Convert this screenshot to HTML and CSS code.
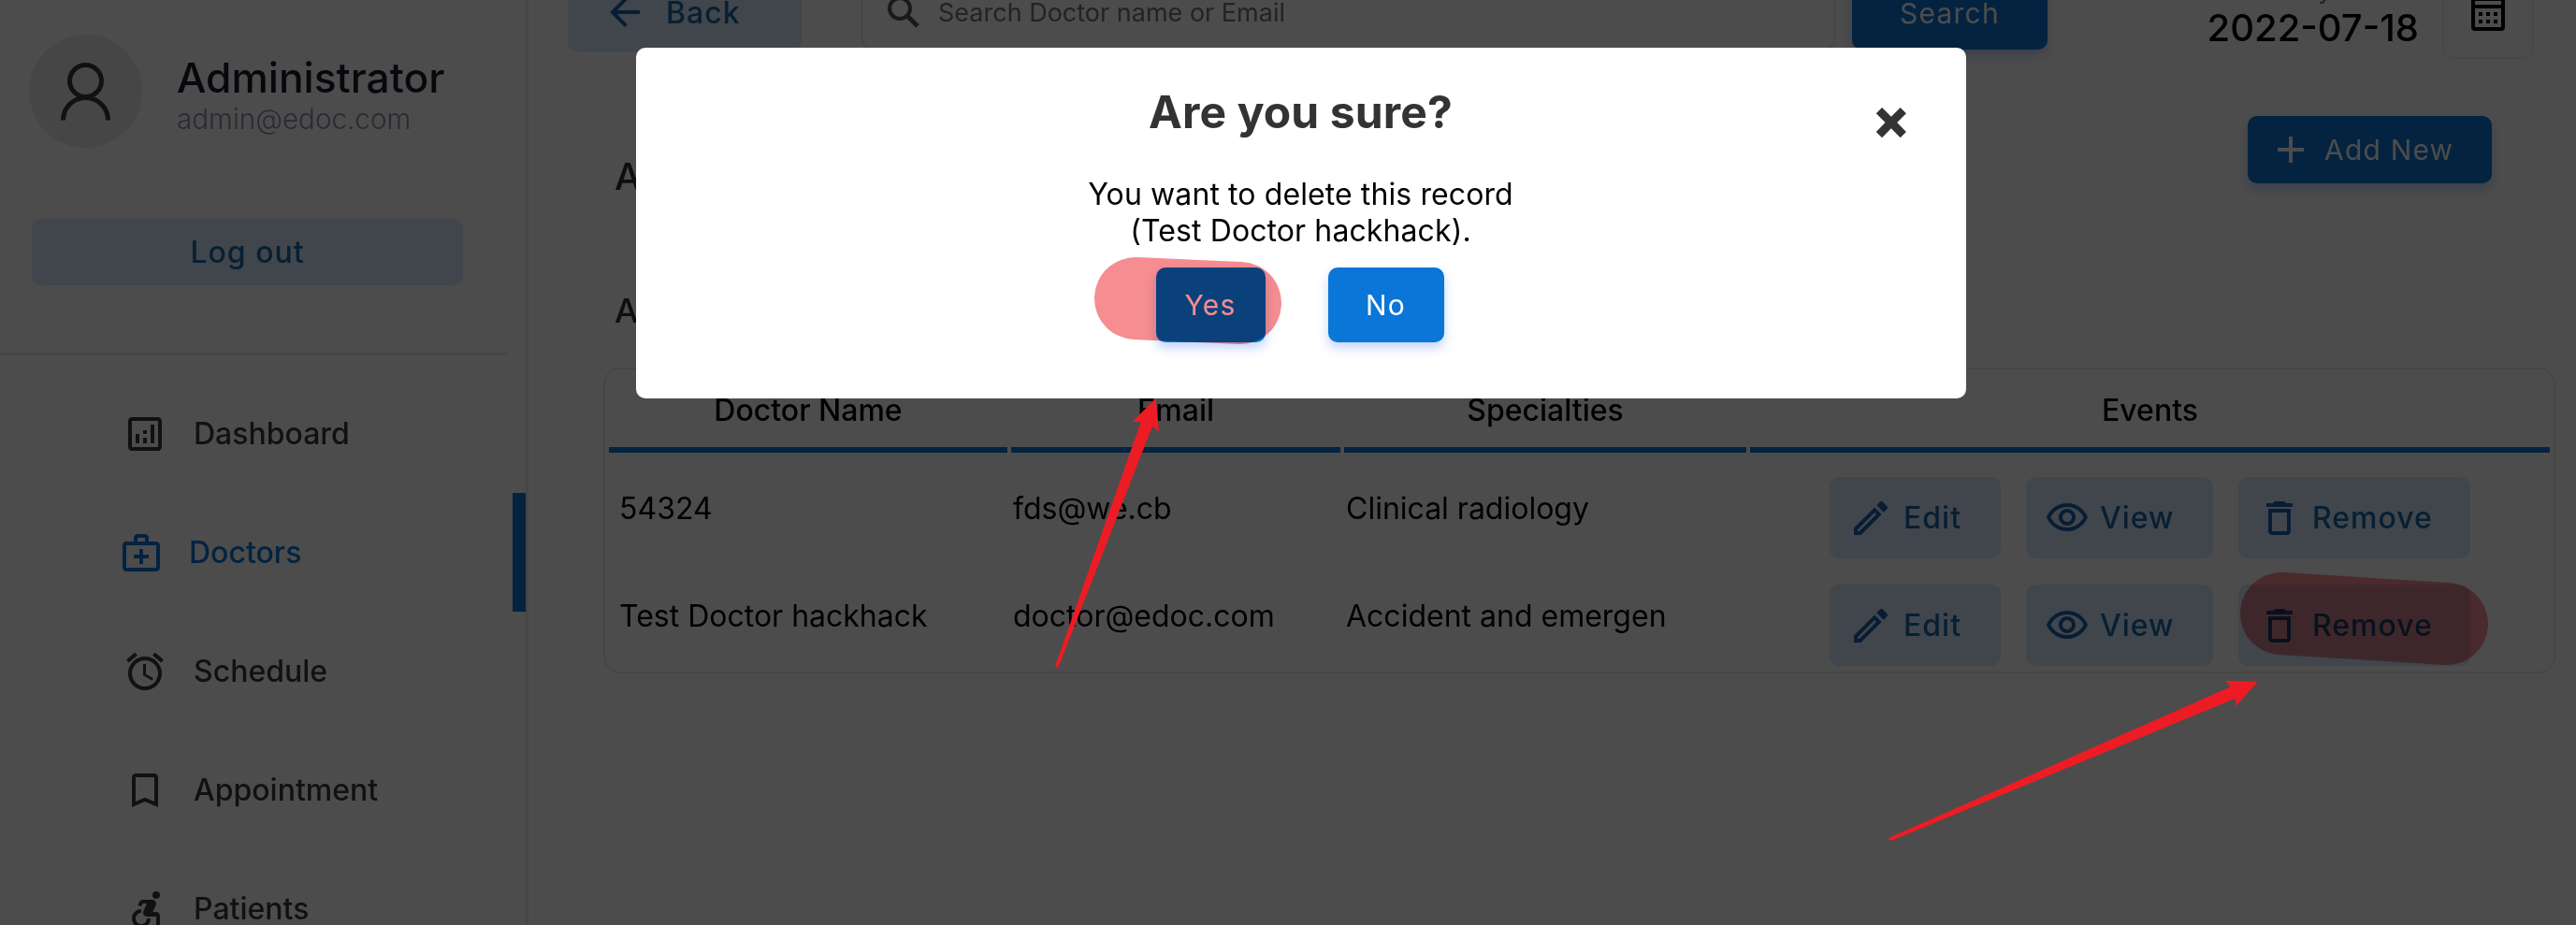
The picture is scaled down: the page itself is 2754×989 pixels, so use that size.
FILE: index.html
```html
<!DOCTYPE html>
<html lang="en">
<head>
<meta charset="utf-8">
<title>Doctors</title>
<link rel="stylesheet" href="styles.css">
</head>
<body>
<svg class="defs" aria-hidden="true">
  <symbol id="i-edit" viewBox="0 0 24 24"><path d="M14.06 9.02l.92.92L5.92 19H5v-.92l9.06-9.06M17.66 3c-.25 0-.51.1-.7.29l-1.83 1.83 3.75 3.75 1.83-1.83c.39-.39.39-1.02 0-1.41l-2.34-2.34c-.2-.2-.45-.29-.71-.29zm-3.6 3.19L3 17.25V21h3.75L17.81 9.94l-3.75-3.75z"/></symbol>
  <symbol id="i-view" viewBox="0 0 24 24"><path d="M12 6c3.79 0 7.17 2.13 8.82 5.5C19.17 14.87 15.79 17 12 17s-7.17-2.13-8.82-5.5C4.83 8.13 8.21 6 12 6m0-2C7 4 2.73 7.11 1 11.5 2.73 15.89 7 19 12 19s9.27-3.11 11-7.5C21.27 7.11 17 4 12 4zm0 5c1.38 0 2.5 1.12 2.5 2.5S13.38 14 12 14s-2.5-1.12-2.5-2.5S10.62 9 12 9m0-2c-2.48 0-4.5 2.02-4.5 4.5S9.52 16 12 16s4.5-2.02 4.5-4.5S14.48 7 12 7z"/></symbol>
  <symbol id="i-trash" viewBox="0 0 24 24"><path d="M16 9v10H8V9h8m-1.500-6h-5l-1 1H5v2h14V4h-3.500l-1-1zM18 7H6v12c0 1.100.9 2 2 2h8c1.100 0 2-.9 2-2V7z"/></symbol>
</svg>
<div class="page">
  <aside class="sidebar">
    <div class="profile">
      <svg class="avatar" viewBox="0 0 121 121"><circle cx="60.500" cy="60.500" r="60.500" fill="#ebebeb"/><g fill="none" stroke="#3a3a3a" stroke-width="5"><circle cx="60.500" cy="49.500" r="17"/><path d="M36.500 91.500a24 24 0 0 1 48 0"/></g></svg>
      <div>
        <p class="profile-name">Administrator</p>
        <p class="profile-mail">admin@edoc.com</p>
      </div>
    </div>
    <button class="logout">Log out</button>
    <div class="rule"></div>
    <nav class="menu">
      <a class="item"><svg class="icon" viewBox="0 0 24 24"><path d="M19 3H5c-1.100 0-2 .9-2 2v14c0 1.100.9 2 2 2h14c1.100 0 2-.9 2-2V5c0-1.100-.9-2-2-2zm0 16H5V5h14v14zM7 12h2v5H7zm8-5h2v10h-2zm-4 7h2v3h-2zm0-4h2v2h-2z"/></svg>Dashboard</a>
      <a class="item active"><svg class="icon" viewBox="0 0 24 24"><path d="M20 6h-4V4c0-1.100-.9-2-2-2h-4c-1.100 0-2 .9-2 2v2H4c-1.100 0-2 .9-2 2v12c0 1.100.9 2 2 2h16c1.100 0 2-.9 2-2V8c0-1.100-.9-2-2-2zM10 4h4v2h-4V4zm10 16H4V8h16v12zM11 10h2v3h3v2h-3v3h-2v-3H8v-2h3z"/></svg>Doctors</a>
      <a class="item"><svg class="icon" viewBox="0 0 24 24"><path d="M12.500 8H11v6l4.750 2.850.75-1.230-4-2.370V8zm4.837-6.190l4.607 3.845-1.280 1.535-4.610-3.843zm-10.674 0l1.282 1.536L3.337 7.190l-1.280-1.536zM12 4c-4.970 0-9 4.030-9 9s4.030 9 9 9 9-4.030 9-9-4.030-9-9-9zm0 16c-3.860 0-7-3.140-7-7s3.140-7 7-7 7 3.140 7 7-3.140 7-7 7z"/></svg>Schedule</a>
      <a class="item"><svg class="icon" viewBox="0 0 24 24"><path d="M17 3H7c-1.100 0-2 .9-2 2v16l7-3 7 3V5c0-1.100-.9-2-2-2zm0 15l-5-2.180L7 18V5h10v13z"/></svg>Appointment</a>
      <a class="item"><svg class="icon" viewBox="0 0 24 24"><circle cx="18" cy="4.540" r="2"/><path d="M15 17h-2c0 1.650-1.350 3-3 3s-3-1.350-3-3 1.350-3 3-3v-2c-2.760 0-5 2.240-5 5s2.240 5 5 5 5-2.240 5-5zm3-3.500h-1.860l1.670-3.670C18.420 8.500 17.440 7 15.960 7h-5.200c-.81 0-1.540.47-1.870 1.200L8.220 10l1.920.53.65-1.530H13l-1.830 4.100c-.6 1.330.39 2.900 1.850 2.900H18v5h2v-5.500c0-1.100-.9-2-2-2z"/></svg>Patients</a>
    </nav>
  </aside>
  <main class="main">
    <header class="topbar">
      <button class="soft back"><svg class="icon" viewBox="0 0 24 24"><path d="M20 11H7.830l5.590-5.590L12 4l-8 8 8 8 1.410-1.410L7.830 13H20v-2z"/></svg>Back</button>
      <div class="search"><svg class="search-icon" viewBox="0 0 36 36"><circle cx="14" cy="14" r="11" fill="none" stroke="#555" stroke-width="4"/><path d="M22 22l11 11" stroke="#555" stroke-width="5"/></svg><span>Search Doctor name or Email</span></div>
      <button class="primary search-btn">Search</button>
      <div class="today"><p class="today-label">Today's Date</p><p class="today-date">2022-07-18</p></div>
      <div class="calendar"><svg viewBox="0 0 36 40"><path fill-rule="evenodd" d="M4 4h28a4 4 0 0 1 4 4v28a4 4 0 0 1-4 4H4a4 4 0 0 1-4-4V8a4 4 0 0 1 4-4zm0 4v4h28V8zm0 8v20h28V16zM8 20h4v4H8zm8 0h4v4h-4zm8 0h4v4h-4zM8 28h4v4H8zm8 0h4v4h-4zm8 0h4v4h-4zM6 0h4v4H6zm20 0h4v4h-4z"/></svg></div>
    </header>
    <div class="add-row">
      <h2 class="add-title">Add New Doctor</h2>
      <button class="primary add"><svg class="icon" viewBox="0 0 24 24"><path d="M19 13h-6v6h-2v-6H5v-2h6V5h2v6h6v2z"/></svg>Add New</button>
    </div>
    <h3 class="all-title">All Doctors (2)</h3>
    <section class="card">
      <div class="grid head"><div>Doctor Name</div><div>Email</div><div>Specialties</div><div>Events</div></div>
      <div class="grid row">
        <div class="cell">54324</div><div class="cell">fds@we.cb</div><div class="cell">Clinical radiology</div>
        <div class="events">
          <button class="soft edit"><svg class="icon"><use href="#i-edit"/></svg>Edit</button>
          <button class="soft view"><svg class="icon"><use href="#i-view"/></svg>View</button>
          <button class="soft remove"><svg class="icon"><use href="#i-trash"/></svg>Remove</button>
        </div>
      </div>
      <div class="grid row">
        <div class="cell">Test Doctor hackhack</div><div class="cell">doctor@edoc.com</div><div class="cell">Accident and emergen</div>
        <div class="events">
          <button class="soft edit"><svg class="icon"><use href="#i-edit"/></svg>Edit</button>
          <button class="soft view"><svg class="icon"><use href="#i-view"/></svg>View</button>
          <button class="soft remove"><svg class="icon"><use href="#i-trash"/></svg>Remove</button>
        </div>
      </div>
    </section>
  </main>
  <div class="overlay">
    <div class="modal">
      <h1 class="modal-title">Are you sure?</h1>
      <span class="close">×</span>
      <p class="modal-text">You want to delete this record<br>(Test Doctor hackhack).</p>
      <div class="modal-actions"><button class="primary yes">Yes</button><button class="primary no">No</button></div>
    </div>
  </div>
  <svg class="marks highlight" viewBox="0 0 2754 989"><path d="M1214 319L1326 324M2439 656L2616 667"/></svg>
  <svg class="marks arrows" viewBox="0 0 2754 989"><path d="M1235.700 426L1210.500 451L1219.600 451.300L1128.300 711.500Q1128.500 714 1131.500 713.500L1232 455.700L1239 461.300zM2413.700 729L2379 727.700L2384.700 734.300L2020.500 895.300Q2018 898 2021.500 899L2390 746.700L2390.300 755z"/></svg>
</div>
</body>
</html>
```

FILE: styles.css
```css
* { box-sizing: border-box; margin: 0; padding: 0; }
body { width: 2754px; height: 989px; overflow: hidden; background: #fff; font-family: Inter, "Liberation Sans", sans-serif; font-size: 32px; color: #000; }
button { border: 0; font-family: inherit; display: flex; align-items: center; }
.defs { position: absolute; width: 0; height: 0; }
.page { position: relative; display: flex; width: 2754px; height: 989px; overflow: hidden; }
.icon { width: 48px; height: 48px; flex: none; fill: currentColor; }

.sidebar { width: 565px; height: 989px; flex: none; border-right: 3px solid #ebebeb; overflow: hidden; }
.profile { display: flex; gap: 37px; padding: 37px 0 0 31px; height: 234px; }
.avatar { width: 121px; height: 121px; flex: none; }
.profile-name { margin-top: 20px; font-size: 44.300px; line-height: 52px; font-weight: 500; color: #161c2d; white-space: nowrap; }
.profile-mail { font-size: 29.600px; line-height: 36px; font-weight: 300; color: #8492a6; }
.logout { margin-left: 34px; width: 461px; height: 71px; justify-content: center; border-radius: 10px; background: #d8ebfa; color: #1969aa; font-size: 32px; font-weight: 500; letter-spacing: 1px; }
.rule { margin-top: 72px; width: 542px; height: 3px; background: #ebebeb; }
.menu { margin-top: 20px; }
.item { display: flex; align-items: center; gap: 28px; height: 127px; padding-left: 131px; font-weight: 500; color: #3b3b3b; }
.item.active { padding-left: 127px; gap: 27px; color: #0a76d8; border-right: 14px solid #0a76d8; }

.main { flex: 1; height: 989px; overflow: hidden; }
.topbar { display: flex; align-items: flex-end; height: 63px; padding-left: 42px; }
.soft { background: #d8ebfa; color: #1969aa; border-radius: 10px; font-size: 32px; font-weight: 500; letter-spacing: 1px; }
.soft .icon { fill: #1b62b3; }
.primary { background: #0a76d8; color: #fff; border-radius: 10px; font-size: 30px; letter-spacing: 1.200px; box-shadow: 0 6px 12px rgba(57, 108, 240, .3); }
.back { width: 250px; height: 84px; margin-bottom: 8px; padding-left: 37px; gap: 20px; }
.search { display: flex; align-items: center; gap: 19px; width: 1041px; height: 84px; margin: 0 18px 11px 64px; padding: 6px 0 0 26px; border: 1px solid #d0d0d0; border-radius: 10px; font-size: 27px; color: #757575; }
.search-icon { width: 36px; height: 36px; }
.search-btn { width: 209px; height: 78px; margin-bottom: 10px; justify-content: center; }
.today { width: 397px; text-align: right; padding-bottom: 8px; }
.today-label { font-size: 28px; line-height: 34px; color: #777; }
.today-date { font-size: 40px; line-height: 50px; font-weight: 500; }
.calendar { display: flex; justify-content: center; align-items: flex-end; width: 98px; height: 98px; margin-left: 25px; padding-bottom: 28px; border: 2px solid #f0f0f8; border-radius: 10px; }
.calendar svg { width: 36px; height: 40px; }
.add-row { display: flex; justify-content: space-between; height: 187px; padding: 61px 90px 0 92px; }
.add-title { font-size: 40px; line-height: 48px; margin-top: 41px; font-weight: 500; color: #313131; }
.add { width: 261px; height: 72px; padding-left: 22px; gap: 12px; }
.all-title { margin-left: 92px; height: 143px; font-size: 36px; line-height: 164px; font-weight: 500; color: #313131; }
.card { margin-left: 80px; width: 2087px; height: 327px; border: 2px solid #ebebeb; border-radius: 18px; padding: 0 4px; }
.grid { display: grid; grid-template-columns: 426px 352px 430px 1fr; column-gap: 4px; }
.head { height: 89px; font-weight: 500; text-align: center; }
.head div { padding-top: 24px; border-bottom: 6px solid #0a76d8; }
.row { height: 115px; }
.cell { padding: 40px 0 0 11px; }
.cell + .cell { padding-left: 2px; }
.events { display: flex; gap: 27px; padding: 26px 0 0 85px; }
.events .soft { height: 87px; }
.edit { width: 183px; padding-left: 20px; gap: 11px; }
.view { width: 200px; padding-left: 20px; gap: 11px; }
.remove { width: 248px; padding-left: 20px; gap: 11px; }

.overlay { position: absolute; inset: 0; padding: 51px 0 0 679.500px; background: rgba(0, 0, 0, .7); }
.modal { position: relative; width: 1422px; height: 375px; border-radius: 10px; background: #fff; text-align: center; }
.modal-title { padding-top: 40px; font-size: 48px; line-height: 58px; font-weight: 700; letter-spacing: .1px; color: #333; }
.close { position: absolute; top: 44px; right: 59px; font-size: 60px; line-height: 64px; font-weight: 800; color: #333; }
.modal-text { margin-top: 39px; line-height: 39px; letter-spacing: .1px; }
.modal-actions { display: flex; gap: 67px; margin: 20px 0 0 556px; }
.modal-actions .primary { height: 80px; justify-content: center; }
.yes { width: 117px; }
.no { width: 124px; }
.marks { position: absolute; left: 0; top: 0; width: 2754px; height: 989px; }
.highlight { mix-blend-mode: multiply; opacity: .5; fill: none; stroke: #ed1c24; stroke-width: 88px; stroke-linecap: round; }
.arrows { fill: #ed1c24; }
```
